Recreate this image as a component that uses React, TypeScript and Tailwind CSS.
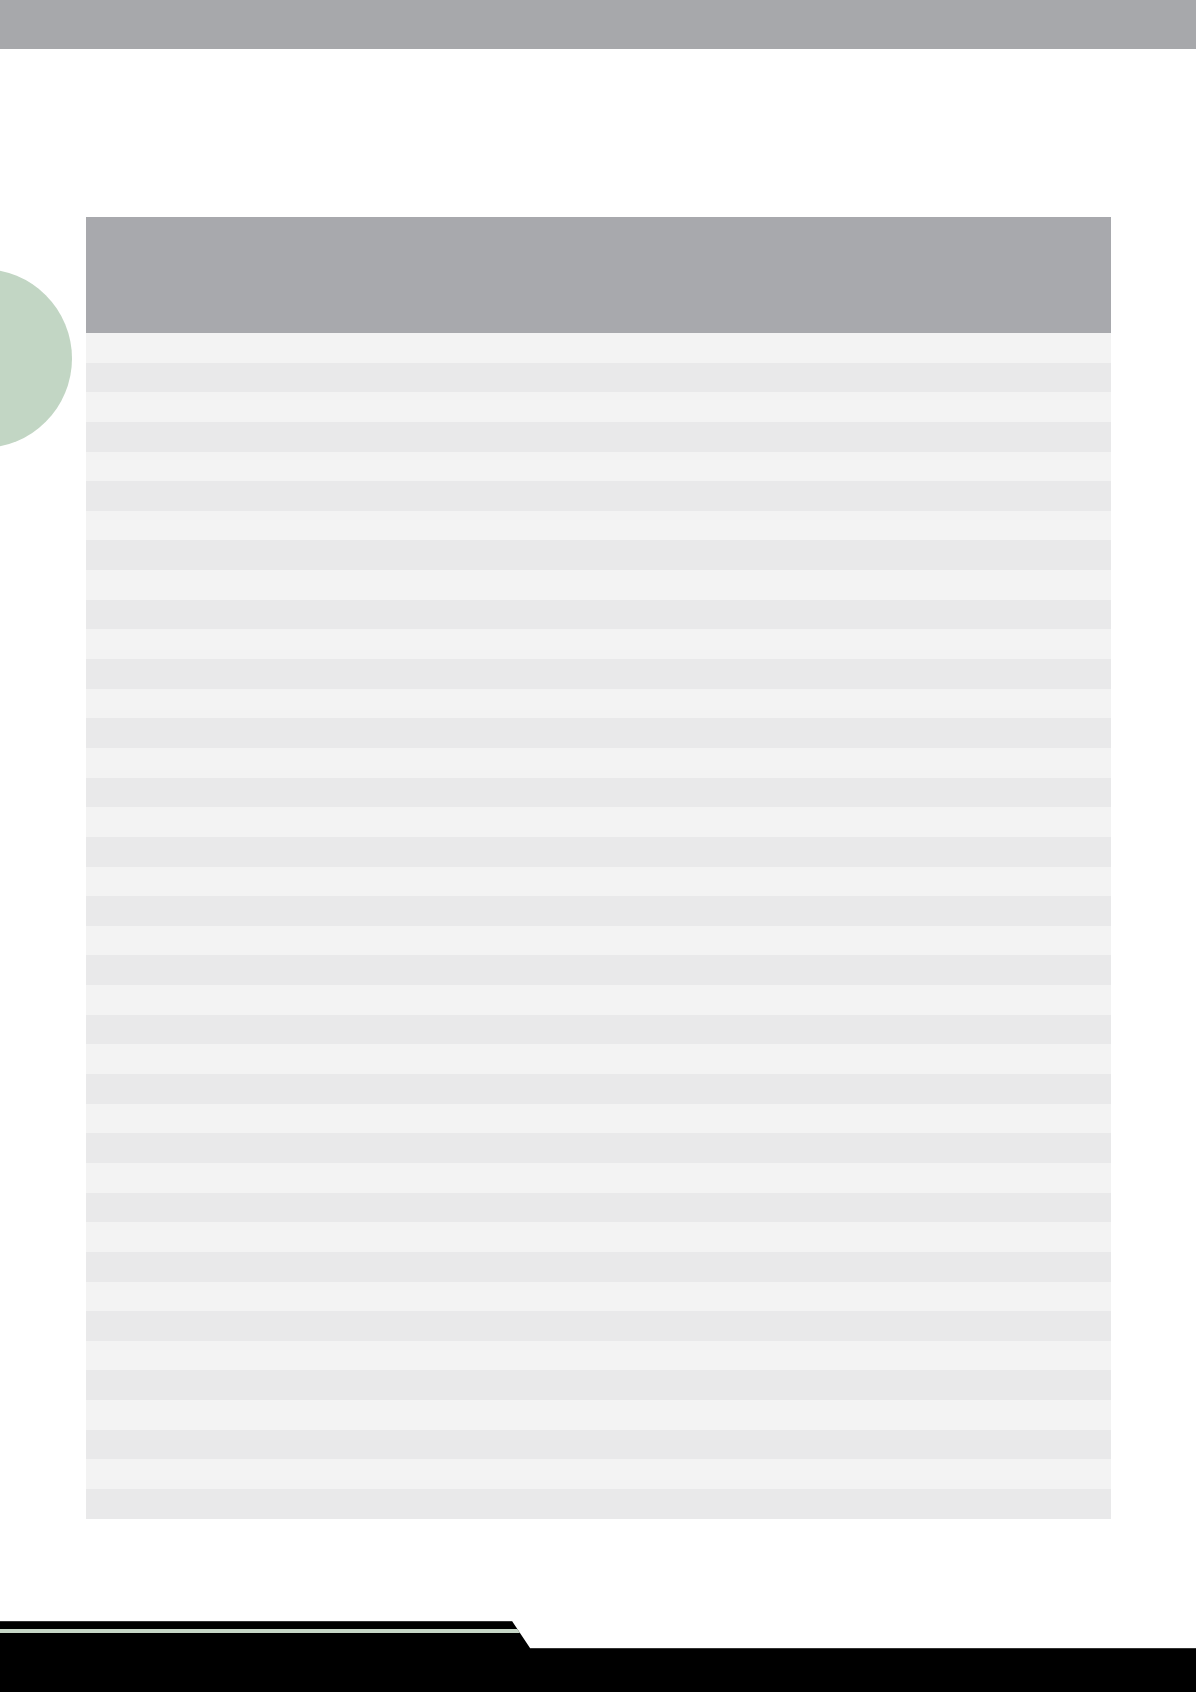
import React from "react";

export default function App() {
  const rows = Array.from({ length: 40 }, (_, i) => i);
  return (
    <div className="relative w-[1196px] h-[1692px] bg-white overflow-hidden flex flex-col" style={{ fontFamily: '"Liberation Sans", sans-serif' }}>
      <div className="h-[49px] w-full bg-[#a7a8ab] shrink-0" />
      <div className="absolute left-[-107px] top-[269px] w-[179px] h-[179px] rounded-full bg-[#c2d6c4]" />
      <div className="mt-[168px] ml-[86px] w-[1025px] shrink-0 flex flex-col">
        <div className="h-[116px] bg-[#a8a9ad]" />
        {rows.map((i) => (
          <div key={i} className={i % 2 === 0 ? "h-[29.65px] bg-[#f3f3f3]" : "h-[29.65px] bg-[#e9e9ea]"} />
        ))}
      </div>
      <div className="mt-auto h-[71px] w-full shrink-0">
        <svg width="1196" height="71" viewBox="0 0 1196 71" className="block">
          <polygon points="0,0 512,0 530,27 1196,27 1196,71 0,71" fill="#000000" />
          <polygon points="0,8 517.3,8 520,12 0,12" fill="#c6d6c6" />
          <line x1="0" y1="0.5" x2="512" y2="0.5" stroke="#333333" strokeWidth="1" />
          <line x1="530" y1="27.5" x2="1196" y2="27.5" stroke="#333333" strokeWidth="1" />
        </svg>
      </div>
    </div>
  );
}
